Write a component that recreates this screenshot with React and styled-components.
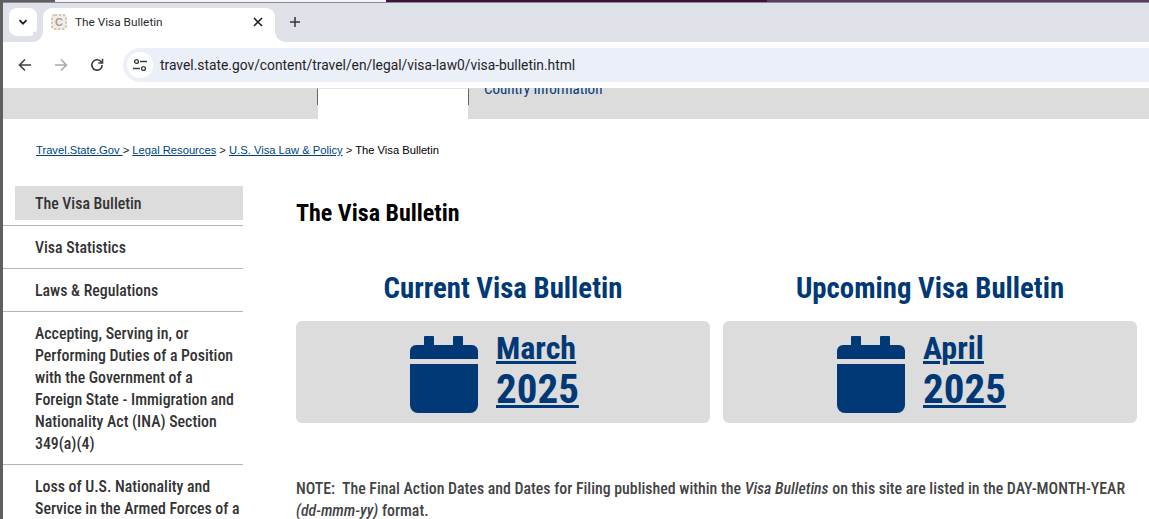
import React from "react";
import styled, { createGlobalStyle } from "styled-components";

const Global = createGlobalStyle`
  html, body {
    margin: 0;
    padding: 0;
    height: 519px;
    overflow: hidden;
    background: #fff;
  }
  * {
    box-sizing: border-box;
  }
`;

const Window = styled.div`
  width: 1149px;
  height: 519px;
  overflow: hidden;
  display: flex;
  flex-direction: column;
  background: #fff;
  border-left: 3px solid #5f5f5f;
  & > * {
    flex: none;
  }
`;

const DesktopStrip = styled.div`
  height: 3px;
  margin-left: -3px;
  display: flex;
  background: #f4f2f4;
  border-bottom: 1px solid #8a8a90;
`;

const StripPart = styled.div`
  width: ${(p) => p.$w}px;
  background: ${(p) => p.$c};
`;

const TabBar = styled.div`
  height: 39px;
  background: #dee1e8;
  display: flex;
  align-items: flex-end;
  padding-left: 6px;
`;

const TabMenu = styled.div`
  width: 28px;
  height: 28px;
  margin-bottom: 6px;
  border-radius: 8px;
  background: #fff;
  display: flex;
  align-items: center;
  justify-content: center;
`;

const Tab = styled.div`
  position: relative;
  width: 232px;
  height: 34px;
  margin-left: 6px;
  background: #fff;
  border-radius: 9px 9px 0 0;
  display: flex;
  align-items: center;
  padding: 0 12px 6px 8px;
  font: 11.8px "Roboto", "Noto Sans", sans-serif;
  color: #2a2c30;
  &::before,
  &::after {
    content: "";
    position: absolute;
    bottom: 0;
    width: 10px;
    height: 10px;
  }
  &::before {
    left: -10px;
    background: radial-gradient(circle at 0 0, #dee1e8 9.5px, #fff 10px);
  }
  &::after {
    right: -10px;
    background: radial-gradient(circle at 100% 0, #dee1e8 9.5px, #fff 10px);
  }
`;

const Favicon = styled.div`
  width: 16px;
  height: 16px;
  border-radius: 4px;
  background: #f1ede6;
  border: 2px dotted #d3c6b0;
  color: #a5a096;
  font: 700 11px/12px "Liberation Sans", sans-serif;
  text-align: center;
  margin-right: 8px;
`;

const TabTitle = styled.span`
  flex: 1;
`;

const NewTab = styled.div`
  margin: 0 0 14px 14px;
  display: flex;
`;

const AddressRow = styled.div`
  height: 46px;
  background: #fff;
  border-top-left-radius: 8px;
  display: flex;
  align-items: center;
  padding-left: 10px;
`;

const NavIcon = styled.div`
  width: 24px;
  height: 24px;
  margin-right: 12px;
  display: flex;
  align-items: center;
  justify-content: center;
`;

const Omnibox = styled.div`
  flex: 1;
  height: 34px;
  margin-left: 2px;
  background: #ebf0f8;
  border-radius: 17px 0 0 17px;
  display: flex;
  align-items: center;
  padding-left: 4px;
`;

const SiteButton = styled.div`
  width: 26px;
  height: 26px;
  border-radius: 50%;
  background: #fff;
  display: flex;
  align-items: center;
  justify-content: center;
`;

const Url = styled.span`
  margin-left: 7px;
  font: 13.82px "Roboto", "Noto Sans", sans-serif;
  color: #1f2328;
`;

const SiteNav = styled.div`
  height: 31px;
  background: #dcdcdc;
  display: flex;
`;

const NavGap = styled.div`
  width: 314px;
`;

const NavActive = styled.div`
  position: relative;
  width: 152px;
  background: #fff;
  border-top: 1px solid #e3e3e3;
  border-left: 1px solid #666;
  border-right: 1px solid #666;
  &::after {
    content: "";
    position: absolute;
    left: -1px;
    right: -1px;
    top: 16px;
    bottom: 0;
    border-left: 1px solid #dcdcdc;
    border-right: 1px solid #dcdcdc;
  }
`;

const NavClip = styled.div`
  margin-left: 15px;
  height: 31px;
  overflow: hidden;
`;

const NavLabel = styled.div`
  margin-top: -8px;
  font: 15px/18px "Roboto", sans-serif;
  font-stretch: 75%;
  color: #003a78;
`;

const Crumbs = styled.div`
  margin: 24px 0 0 33px;
  height: 16px;
  font: 11.2px/14px "Liberation Sans", Arial, sans-serif;
  color: #222;
  a {
    color: #00437f;
    text-decoration: underline;
  }
  b {
    font-weight: 400;
    color: #000;
  }
`;

const Body = styled.div`
  margin-top: 27px;
  display: flex;
`;

const Side = styled.nav`
  width: 240px;
  flex: none;
`;

const SideItem = styled.div`
  padding: ${(p) => (p.$active ? "7px 0 5px 20px" : "11px 0 9px 32px")};
  margin: ${(p) => (p.$active ? "0 0 5px 12px" : "0")};
  background: ${(p) => (p.$active ? "#dcdcdc" : "transparent")};
  border-bottom: ${(p) => (p.$active ? "0" : "1px solid #b5b5b5")};
  font: 500 15.85px/22px "Roboto", sans-serif;
  font-stretch: 75%;
  color: #333;
  white-space: nowrap;
`;

const Rule = styled.div`
  height: 1px;
  background: #b5b5b5;
`;

const SideLine = styled.span`
  display: block;
`;

const Main = styled.main`
  flex: 1;
  padding: 13px 12px 0 53px;
  min-width: 0;
`;

const Heading = styled.h1`
  margin: 0;
  font: 700 24px/28px "Roboto", sans-serif;
  font-stretch: 75%;
  color: #000;
`;

const Cards = styled.div`
  margin-top: 43px;
  display: grid;
  grid-template-columns: 1fr 1fr;
  gap: 13px;
`;

const CardTitle = styled.h2`
  margin: 0 0 15px;
  text-align: center;
  font: 700 28.8px/36px "Roboto", sans-serif;
  font-stretch: 75%;
  color: #003976;
`;

const DateBox = styled.div`
  height: 102px;
  background: #dcdcdc;
  border-radius: 6px;
  display: flex;
  align-items: center;
  justify-content: center;
  gap: 18px;
`;

const CalendarIcon = styled.svg`
  margin-top: 4px;
  fill: #003976;
`;

const DateLink = styled.a`
  display: flex;
  flex-direction: column;
  width: 100px;
  padding-bottom: 4px;
  color: #003976;
  text-decoration: none;
  font-stretch: 75%;
  font-family: "Roboto", sans-serif;
  font-weight: 700;
`;

const Month = styled.span`
  font-size: 32px;
  line-height: 38px;
  text-decoration: underline;
  text-decoration-thickness: 3px;
`;

const Year = styled.span`
  font-size: 41px;
  line-height: 45px;
  text-decoration: underline;
  text-decoration-thickness: 3px;
`;

const Note = styled.p`
  margin: 55px 0 0;
  font: 500 15.85px/22px "Roboto", sans-serif;
  font-stretch: 75%;
  color: #444;
`;

const Back = () => (
  <svg width="16" height="16" viewBox="0 0 16 16" fill="none" stroke="#3c4043" strokeWidth="1.6">
    <path d="M14 8H2.5M8 2.5 2.5 8 8 13.5" />
  </svg>
);

const Forward = () => (
  <svg width="16" height="16" viewBox="0 0 16 16" fill="none" stroke="#a8abaf" strokeWidth="1.6">
    <path d="M2 8h11.5M8 2.5 13.5 8 8 13.5" />
  </svg>
);

const Reload = () => (
  <svg width="16" height="16" viewBox="0 0 16 16" fill="none" stroke="#3c4043" strokeWidth="1.6">
    <path d="M13.2 8a5.2 5.2 0 1 1-1.5-3.7L13.4 6" />
    <path d="M13.5 1.8V6H9.3" />
  </svg>
);

const Tune = () => (
  <svg width="16" height="16" viewBox="0 0 16 16" fill="none" stroke="#3c4043" strokeWidth="1.4">
    <circle cx="4.5" cy="4.5" r="1.9" />
    <path d="M8 4.5h7M1 11.5h7" />
    <circle cx="11.5" cy="11.5" r="1.9" />
  </svg>
);

const Calendar = () => (
  <CalendarIcon width="68" height="77" viewBox="0 0 68 77">
    <path d="M15 0h8a1 1 0 0 1 1 1v8h19V1a1 1 0 0 1 1-1h8a1 1 0 0 1 1 1v8h9a6 6 0 0 1 6 6v8H0v-8a6 6 0 0 1 6-6h8V1a1 1 0 0 1 1-1z" />
    <path d="M0 28h68v41a8 8 0 0 1-8 8H8a8 8 0 0 1-8-8z" />
  </CalendarIcon>
);

const cards = [
  { title: "Current Visa Bulletin", month: "March" },
  { title: "Upcoming Visa Bulletin", month: "April" },
];

const sideLinks = [
  ["Visa Statistics"],
  ["Laws & Regulations"],
  [
    "Accepting, Serving in, or",
    "Performing Duties of a Position",
    "with the Government of a",
    "Foreign State - Immigration and",
    "Nationality Act (INA) Section",
    "349(a)(4)",
  ],
  ["Loss of U.S. Nationality and", "Service in the Armed Forces of a"],
];

export default function App() {
  return (
    <Window>
      <Global />
      <DesktopStrip>
        <StripPart $w={55} $c="#5f5f5f" />
        <StripPart $w={331} $c="#f4f2f4" />
        <StripPart $w={381} $c="#3d1240" />
        <StripPart $w={382} $c="#5c3a62" />
      </DesktopStrip>
      <TabBar>
        <TabMenu>
          <svg width="12" height="12" viewBox="0 0 12 12" fill="none" stroke="#1f1f1f" strokeWidth="1.8">
            <path d="M2.5 4.2 6 7.7l3.5-3.5" />
          </svg>
        </TabMenu>
        <Tab>
          <Favicon>C</Favicon>
          <TabTitle>The Visa Bulletin</TabTitle>
          <svg width="10" height="10" viewBox="0 0 10 10" stroke="#222" strokeWidth="1.6">
            <path d="M1 1l8 8M9 1 1 9" />
          </svg>
        </Tab>
        <NewTab>
          <svg width="12" height="12" viewBox="0 0 12 12" stroke="#333" strokeWidth="1.5">
            <path d="M6 1v10M1 6h10" />
          </svg>
        </NewTab>
      </TabBar>
      <AddressRow>
        <NavIcon><Back /></NavIcon>
        <NavIcon><Forward /></NavIcon>
        <NavIcon><Reload /></NavIcon>
        <Omnibox>
          <SiteButton><Tune /></SiteButton>
          <Url>travel.state.gov/content/travel/en/legal/visa-law0/visa-bulletin.html</Url>
        </Omnibox>
      </AddressRow>
      <SiteNav>
        <NavGap />
        <NavActive />
        <NavClip>
          <NavLabel>Country Information</NavLabel>
        </NavClip>
      </SiteNav>
      <Crumbs>
        <a href="#t">Travel.State.Gov </a> &gt; <a href="#l">Legal Resources</a> &gt;{" "}
        <a href="#u">U.S. Visa Law &amp; Policy</a> &gt; <b>The Visa Bulletin</b>
      </Crumbs>
      <Body>
        <Side>
          <SideItem $active>The Visa Bulletin</SideItem>
          <Rule />
          {sideLinks.map((lines) => (
            <SideItem key={lines[0]}>
              {lines.map((line) => (
                <SideLine key={line}>{line}</SideLine>
              ))}
            </SideItem>
          ))}
        </Side>
        <Main>
          <Heading>The Visa Bulletin</Heading>
          <Cards>
            {cards.map((card) => (
              <div key={card.title}>
                <CardTitle>{card.title}</CardTitle>
                <DateBox>
                  <Calendar />
                  <DateLink href="#b">
                    <Month>{card.month}</Month>
                    <Year>2025</Year>
                  </DateLink>
                </DateBox>
              </div>
            ))}
          </Cards>
          <Note>
            NOTE:&nbsp; The Final Action Dates and Dates for Filing published within the{" "}
            <i>Visa Bulletins</i> on this site are listed in the DAY-MONTH-YEAR <i>(dd-mmm-yy)</i> format.
          </Note>
        </Main>
      </Body>
    </Window>
  );
}
